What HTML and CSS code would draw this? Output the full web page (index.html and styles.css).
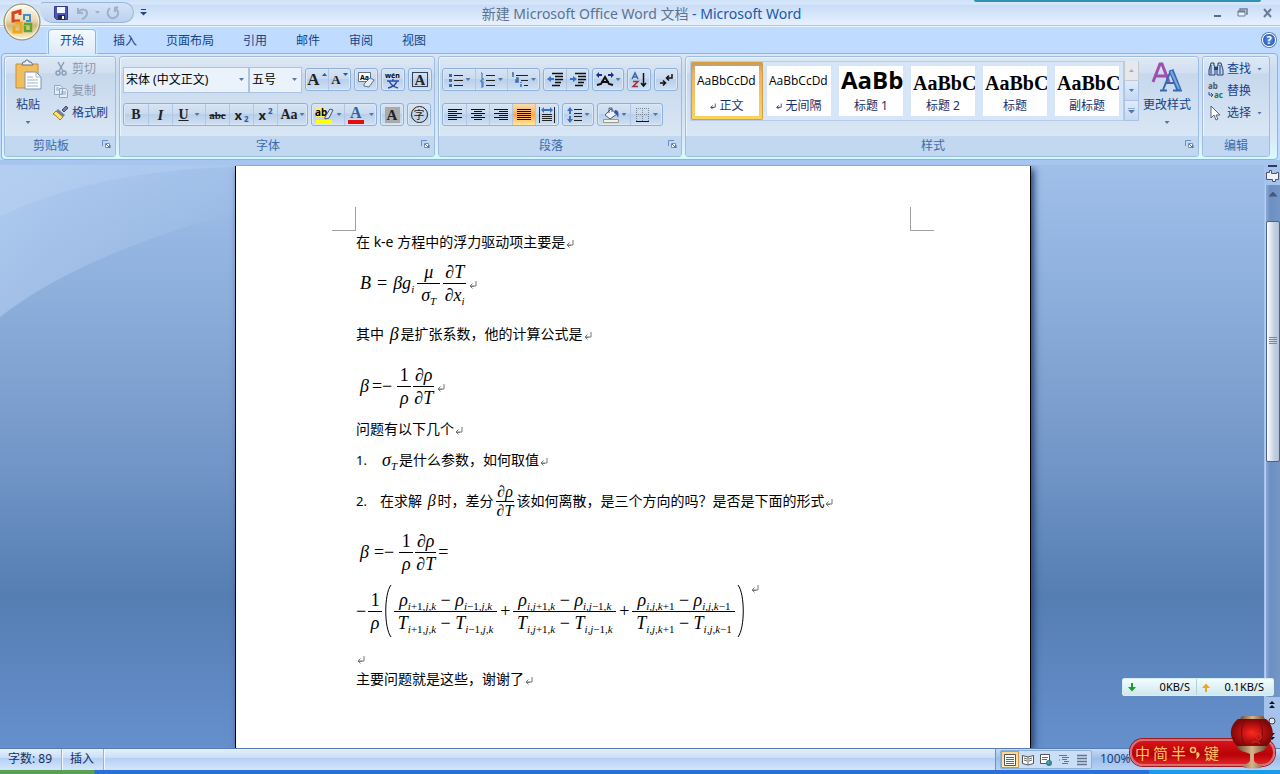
FILE: index.html
```html
<!DOCTYPE html>
<html lang="zh-CN">
<head>
<meta charset="utf-8">
<title>新建 Microsoft Office Word 文档 - Microsoft Word</title>
<link rel="stylesheet" href="styles.css">
</head>
<body>
<svg class="defs" aria-hidden="true">
  <defs>
    <symbol id="ret" viewBox="0 0 8 8"><path d="M7 0v5H2M5 5.500H1M3.500 2.500L1 5l2.500 2.500" fill="none" stroke="currentColor"/></symbol>
    <symbol id="dlg" viewBox="0 0 9 9"><path d="M.5 6V.5H6" fill="none" stroke="#6a8fc0"/><path d="M3.500 3.500h4v4h-4z" fill="#fff" stroke="#6a8fc0"/><path d="M4 4l4 4V5" fill="none" stroke="#4a6fa5"/></symbol>
    <linearGradient id="gGold" x2="0" y2="1"><stop stop-color="#fffef5"/><stop offset=".45" stop-color="#e9d9ae"/><stop offset=".6" stop-color="#d1b878"/><stop offset="1" stop-color="#fff6cf"/></linearGradient>
    <radialGradient id="gRed"><stop stop-color="#ff2a20"/><stop offset=".5" stop-color="#c01212"/><stop offset="1" stop-color="#7c0808"/></radialGradient>
    <linearGradient id="gStem"><stop stop-color="#6b4a32"/><stop offset=".5" stop-color="#d8b48c"/><stop offset="1" stop-color="#6b4a32"/></linearGradient>
    <linearGradient id="gSwoosh" x2="1" y2="0"><stop stop-color="#bcd5f5" stop-opacity=".5"/><stop offset="1" stop-color="#bcd5f5" stop-opacity=".05"/></linearGradient>
  </defs>
</svg>

<header class="titlebar">
  <button class="office" aria-label="Office 按钮">
    <svg viewBox="0 0 38 38" width="38" height="38"><circle cx="19" cy="19" r="18" fill="url(#gGold)" stroke="#8d7f60"/><circle cx="19" cy="19" r="16.500" fill="none" stroke="#fff" stroke-opacity=".7"/>
      <g fill="none" stroke-width="3"><path d="M17 18h-7V10l7-2v4" stroke="#d8421c"/><path d="M21 17v-5h6v6h-4" stroke="#3d8fd0" stroke-width="2"/><path d="M12 20h6v9h-7v-6" stroke="#f0a51c"/><path d="M21 21h7v7h-6v-5" stroke="#5ba632" stroke-width="2.500"/></g></svg>
  </button>
  <div class="qat">
    <button aria-label="保存"><svg viewBox="0 0 16 16" width="16" height="16"><path d="M1.500 1.500h13v13h-11l-2-2z" fill="#5257b5" stroke="#33388c"/><path d="M4 2h8v6H4z" fill="#f3f6ff"/><path d="M5 10h7v5H5z" fill="#28294e"/><path d="M9 11h2v3H9z" fill="#fff"/></svg></button>
    <button aria-label="撤消"><svg viewBox="0 0 16 16" width="16" height="16"><path d="M4 3v5h5M4 8c3-5 9-4 9 0 0 3-2 5-5 6" fill="none" stroke="#9fb0cc" stroke-width="2"/></svg></button>
    <i class="caret pale"></i>
    <button aria-label="重复"><svg viewBox="0 0 16 16" width="16" height="16"><path d="M5 3c-5 5-1 11 4 10 5-1 5-7 2-9M13 2l-3 1v4" fill="none" stroke="#9fb0cc" stroke-width="2"/></svg></button>
  </div>
  <button class="qat-more" aria-label="自定义快速访问工具栏"><svg viewBox="0 0 7 7" width="7" height="7"><path d="M1 .5h5" stroke="#24467e"/><path d="M0 3h7L3.500 6.500z" fill="#24467e"/></svg></button>
  <h1><span>新建 Microsoft Office Word 文档</span> - Microsoft Word</h1>
  <div class="winbtns">
    <button aria-label="最小化"><svg viewBox="0 0 12 12" width="12" height="12"><path d="M2 9h7" stroke="#5b6b86" stroke-width="2"/></svg></button>
    <button aria-label="还原"><svg viewBox="0 0 12 12" width="12" height="12"><path d="M3 3V2h7v5H9" fill="none" stroke="#6b7c98" stroke-width="1.500"/><path d="M1 4h7v5H1z" fill="#e8f1fd" stroke="#6b7c98"/><path d="M1 4.500h7" stroke="#6b7c98" stroke-width="2"/></svg></button>
    <button aria-label="关闭"><svg viewBox="0 0 12 12" width="12" height="12"><path d="M2 2l7 8M9 2l-7 8" stroke="#6b7c98" stroke-width="2"/></svg></button>
  </div>
  <div class="peek"></div>
</header>

<nav class="tabs" role="tablist">
  <button role="tab" aria-selected="true" class="tab on">开始</button>
  <button role="tab" class="tab">插入</button>
  <button role="tab" class="tab">页面布局</button>
  <button role="tab" class="tab">引用</button>
  <button role="tab" class="tab">邮件</button>
  <button role="tab" class="tab">审阅</button>
  <button role="tab" class="tab">视图</button>
  <button class="help" aria-label="帮助">?</button>
</nav>

<section class="ribbon">
  <section class="group clip">
    <div class="body">
      <button class="big paste"><svg viewBox="0 0 28 32" width="28" height="32"><path d="M2 4h22v24H2z" fill="#f2bd5b" stroke="#c78f34"/><path d="M8 5h11l-2-3h-2a2 2 0 0 0-4 0H9z" fill="#eef0f2" stroke="#66707c"/><path d="M11 12h11l5 5v12H11z" fill="#fff" stroke="#7b94b5"/><path d="M22 12v5h5M13 17h6M13 20h11M13 23h11M13 26h11" fill="none" stroke="#9fb4ce"/></svg><span>粘贴</span><i class="caret"></i></button>
      <div class="stack">
        <button class="cmd off"><svg viewBox="0 0 16 16" width="16" height="16"><path d="M5 1l5 9M11 1l-5 9" stroke="#8c9db8" stroke-width="1.500"/><circle cx="5" cy="12" r="2" fill="none" stroke="#8c9db8" stroke-width="1.500"/><circle cx="11" cy="12" r="2" fill="none" stroke="#8c9db8" stroke-width="1.500"/></svg>剪切</button>
        <button class="cmd off"><svg viewBox="0 0 16 16" width="16" height="16"><path d="M1.500 2.500h6l2 2v7h-8zM6.500 5.500h6l2 2v7h-8z" fill="#e6edf8" stroke="#93a6c4"/><path d="M3 5h3M3 7h3M8 9h5M8 11h5" stroke="#93a6c4"/></svg>复制</button>
        <button class="cmd"><svg viewBox="0 0 16 16" width="16" height="16"><path d="M9 5l4-4 2 2-4 4z" fill="#7a7fa5" stroke="#434b78"/><path d="M5 4l7 6-2 2-7-6z" fill="#6a80b0"/><path d="M3 6l7 6-3 3C5 13 3 10 0 9z" fill="#ffe36b" stroke="#a57a20"/></svg>格式刷</button>
      </div>
    </div>
    <footer>剪贴板<svg class="dlg"><use href="#dlg"/></svg></footer>
  </section>

  <section class="group font">
    <div class="body rows">
      <div class="row">
        <div class="combos">
          <label class="combo name"><select aria-label="字体"><option>宋体 (中文正文)</option></select><i class="caret"></i></label>
          <label class="combo size"><select aria-label="字号"><option>五号</option></select><i class="caret"></i></label>
        </div>
        <div class="bar"><button class="b" aria-label="增大字体"><b class="s16">A</b><svg class="hi" viewBox="0 0 5 3" width="5" height="3"><path d="M0 3h5L2.500 0z" fill="#2858a0"/></svg></button><button class="b" aria-label="缩小字体"><b class="s12">A</b><svg class="hi" viewBox="0 0 5 3" width="5" height="3"><path d="M0 0h5L2.500 3z" fill="#2858a0"/></svg></button></div>
        <div class="bar"><button class="b" aria-label="清除格式"><svg viewBox="0 0 18 18" width="18" height="18"><path d="M1.500 1.500h12v9h-12z" fill="#fff" stroke="#65738b"/><text x="3" y="9" class="t7">Aa</text><path d="M7 13l6-6 4 2-5 7-5-1z" fill="#e9edf5" stroke="#64728a"/></svg></button></div>
        <div class="bar"><button class="b" aria-label="拼音指南"><svg viewBox="0 0 18 18" width="18" height="18"><text x="1" y="7" class="t7">wén</text><path d="M3 10h12M9 8v2M5 10c2 4 5 6 9 7M13 10c-1 3-4 6-9 7" fill="none" stroke="#2b4fae" stroke-width="1.500"/></svg></button></div>
        <div class="bar"><button class="b" aria-label="字符边框"><b class="boxed">A</b></button></div>
      </div>
      <div class="row second">
        <div class="bar"><button class="b"><b>B</b></button><button class="b"><em>I</em></button><button class="b u" aria-label="下划线"><u>U</u><i class="caret"></i></button><button class="b"><s>abc</s></button><button class="b"><b class="sx">x</b><small class="lo">2</small></button><button class="b"><b class="sx">x</b><small class="up">2</small></button><button class="b aa"><b>Aa</b><i class="caret"></i></button></div>
        <div class="bar"><button class="b wide" aria-label="突出显示"><svg viewBox="0 0 18 18" width="18" height="18"><path d="M1 1h10v10H1z" fill="#ffee68"/><text x="0" y="10" class="t10">ab</text><path d="M10 11l5-8 3 1-4 8-4 1z" fill="#dbe5f4" stroke="#44526d"/><path d="M1 14h16v4H1z" fill="#ffff00"/></svg><i class="caret"></i></button><button class="b wide" aria-label="字体颜色"><svg viewBox="0 0 18 18" width="18" height="18"><text x="3" y="12" class="t16">A</text><path d="M1 14h16v4H1z" fill="#e80b0b"/></svg><i class="caret"></i></button></div>
        <div class="bar"><button class="b w22" aria-label="字符底纹"><b class="shade">A</b></button></div>
        <div class="bar"><button class="b w22" aria-label="带圈字符"><span class="ring">字</span></button></div>
      </div>
    </div>
    <footer>字体<svg class="dlg"><use href="#dlg"/></svg></footer>
  </section>

  <section class="group para">
    <div class="body rows">
      <div class="row">
        <div class="bar"><button class="b w32" aria-label="项目符号"><svg viewBox="0 0 16 16" width="16" height="16"><path d="M1 2h3v3H1zM1 7h3v3H1zM1 12h3v3H1z" fill="#3c68b2"/><path d="M6 3.500h9M6 8.500h9M6 13.500h9" stroke="#222"/></svg><i class="caret"></i></button><button class="b w32" aria-label="编号"><svg viewBox="0 0 16 16" width="16" height="16"><path d="M1 1h1v4M1 6h2v2H1v2h3M1 11h2v4H1M1 13h2" fill="none" stroke="#3c68b2"/><path d="M6 3.500h9M6 8.500h9M6 13.500h9" stroke="#222"/></svg><i class="caret"></i></button><button class="b w32" aria-label="多级列表"><svg viewBox="0 0 18 16" width="18" height="16"><path d="M1 1h1v4M5 6h2v4H5V8h2M10 10v1M10 12v3" fill="none" stroke="#3c68b2" stroke-width="1.500"/><path d="M5 3.500h12M10 8.500h7M13 13.500h4" stroke="#222"/></svg><i class="caret"></i></button></div>
        <div class="bar"><button class="b" aria-label="减少缩进量"><svg viewBox="0 0 16 16" width="16" height="16"><path d="M5 1.500h11M8 4.500h8M8 7.500h8M8 10.500h6M5 13.500h8" stroke="#111" stroke-width="1.500"/><path d="M0 7l4-3v2h3v2H4v2z" fill="#3b70c4"/></svg></button><button class="b" aria-label="增加缩进量"><svg viewBox="0 0 16 16" width="16" height="16"><path d="M5 1.500h11M8 4.500h8M8 7.500h8M8 10.500h6M5 13.500h8" stroke="#111" stroke-width="1.500"/><path d="M7 7L3 4v2H0v2h3v2z" fill="#3b70c4"/></svg></button></div>
        <div class="bar"><button class="b w30" aria-label="中文版式"><svg viewBox="0 0 18 16" width="18" height="16"><path d="M1 13l4-1 4-7 4 7 4 1M5 10h8" fill="none" stroke="#111" stroke-width="2"/><path d="M0 3l3-3v2h3v2H3v2zM18 3l-3-3v2h-3v2h3v2z" fill="#1f2b92"/></svg><i class="caret"></i></button></div>
        <div class="bar"><button class="b" aria-label="排序"><svg viewBox="0 0 16 16" width="16" height="16"><path d="M1 7l3-6 3 6M2 5h4" fill="none" stroke="#3d67ac" stroke-width="1.500"/><path d="M2 9.500h5l-5 5h5" fill="none" stroke="#a03038" stroke-width="1.500"/><path d="M12.500 1v13M10 11l2.500 3 2.500-3" fill="none" stroke="#111" stroke-width="1.500"/></svg></button></div>
        <div class="bar"><button class="b" aria-label="显示编辑标记"><svg viewBox="0 0 16 16" width="16" height="16"><path d="M14 2v4H9M11 3.500L8.500 6 11 8.500M2 11h5M5 8.500L7.500 11 5 13.500" fill="none" stroke="#111" stroke-width="1.500"/></svg></button></div>
      </div>
      <div class="row">
        <div class="bar align"><button class="b" aria-label="左对齐"><svg viewBox="0 0 16 14" width="16" height="14"><path d="M1 1.500h14M1 3.500h9M1 5.500h14M1 7.500h9M1 9.500h14M1 11.500h9" stroke="#111"/></svg></button><button class="b" aria-label="居中"><svg viewBox="0 0 16 14" width="16" height="14"><path d="M1 1.500h14M4 3.500h8M1 5.500h14M4 7.500h8M1 9.500h14M4 11.500h8" stroke="#111"/></svg></button><button class="b" aria-label="右对齐"><svg viewBox="0 0 16 14" width="16" height="14"><path d="M1 1.500h14M6 3.500h9M1 5.500h14M6 7.500h9M1 9.500h14M6 11.500h9" stroke="#111"/></svg></button><button class="b pressed" aria-label="两端对齐" aria-pressed="true"><svg viewBox="0 0 16 14" width="16" height="14"><path d="M1 1.500h14M1 3.500h14M1 5.500h14M1 7.500h14M1 9.500h14M1 11.500h14" stroke="#111"/></svg></button><button class="b" aria-label="分散对齐"><svg viewBox="0 0 16 16" width="16" height="16"><path d="M.5 0v16M15.500 0v16M3 7.500h10M3 9.500h10M3 11.500h10M3 13.500h10" stroke="#222"/><path d="M2 3l3-3v2h6V0l3 3-3 3V4H5v2z" fill="#3b70c4"/></svg></button></div>
        <div class="bar"><button class="b w30" aria-label="行距"><svg viewBox="0 0 16 16" width="16" height="16"><path d="M3 0l3 4H4v3H2V4H0zM3 16l3-4H4V9H2v3H0z" fill="#3b70c4"/><path d="M7 2.500h8M7 6.500h8M7 9.500h8M7 13.500h8" stroke="#222"/></svg><i class="caret"></i></button></div>
        <div class="bar"><button class="b w32" aria-label="底纹"><svg viewBox="0 0 18 16" width="18" height="16"><path d="M3 8l6-6 6 5-7 5z" fill="#eef3fb" stroke="#4c5a74"/><path d="M7 6V1h3v4" fill="none" stroke="#4c5a74"/><path d="M13 3c4 0 4 4 3 8-1-3-2-4-4-5z" fill="#2e5aa8"/><path d="M1.500 12.500h15v3h-15z" fill="#f3f1e3" stroke="#99988c"/></svg><i class="caret"></i></button><button class="b w32" aria-label="边框"><svg viewBox="0 0 16 16" width="16" height="16"><path d="M1.500 1v13M7.500 1v13M13.500 1v13M1 1.500h13M1 7.500h13" stroke="#7b8799" stroke-dasharray="1 1"/><path d="M1 14.500h13" stroke="#111"/></svg><i class="caret"></i></button></div>
      </div>
    </div>
    <footer>段落<svg class="dlg"><use href="#dlg"/></svg></footer>
  </section>

  <section class="group styles">
    <div class="body">
      <div class="gallery">
        <button class="style sel"><span class="pv">AaBbCcDd</span><span class="nm"><svg class="ret"><use href="#ret"/></svg> 正文</span></button>
        <button class="style"><span class="pv">AaBbCcDd</span><span class="nm"><svg class="ret"><use href="#ret"/></svg> 无间隔</span></button>
        <button class="style"><span class="pv h1">AaBb</span><span class="nm">标题 1</span></button>
        <button class="style"><span class="pv h2">AaBbC</span><span class="nm">标题 2</span></button>
        <button class="style"><span class="pv h2">AaBbC</span><span class="nm">标题</span></button>
        <button class="style"><span class="pv h2">AaBbC</span><span class="nm">副标题</span></button>
      </div>
      <div class="spin"><button class="dis" aria-label="上一行"><i class="caret flip"></i></button><button aria-label="下一行"><i class="caret"></i></button><button aria-label="其他"><i class="caret lined"></i></button></div>
      <button class="big change"><svg viewBox="0 0 30 30" width="30" height="30"><path d="M1 20L8 2h2l7 18M4 14h10" fill="none" stroke="#a04fae" stroke-width="3"/><path d="M11 28l8-20M14 21h10" fill="none" stroke="#3668b4" stroke-width="2"/><path d="M19 8l8 20" stroke="#3668b4" stroke-width="5"/><path d="M19 9l8 18" stroke="#78a8e6" stroke-width="2"/><path d="M8 28.500h7M21 28.500h9" stroke="#3668b4" stroke-width="2"/></svg><span>更改样式</span><i class="caret"></i></button>
    </div>
    <footer>样式<svg class="dlg"><use href="#dlg"/></svg></footer>
  </section>

  <section class="group edit">
    <div class="body stack">
      <button class="cmd"><svg viewBox="0 0 16 16" width="16" height="16"><path d="M3 2h3v3h1v9H1V9zM10 2h3l2 7v5H9V5h1z" fill="#c2d5f2" stroke="#27406f"/><path d="M6 6h4v3H6z" fill="#27406f"/><path d="M3 4v9M12 4v9" stroke="#27406f"/></svg>查找<i class="caret"></i></button>
      <button class="cmd"><svg viewBox="0 0 16 16" width="16" height="16"><text x="0" y="6" class="t8">ab</text><text x="6" y="15" class="t8 grn">ac</text><path d="M1 9v3h4M3 10l2 2-2 2" fill="none" stroke="#294f8f"/></svg>替换</button>
      <button class="cmd"><svg viewBox="0 0 16 16" width="16" height="16"><path d="M3 1v12l3-3 2 5 2-1-2-4h4z" fill="#fff" stroke="#58657c"/></svg>选择<i class="caret"></i></button>
    </div>
    <footer>编辑</footer>
  </section>
</section>

<main class="workspace">
  <svg class="swoosh" viewBox="0 0 1280 583" preserveAspectRatio="none" aria-hidden="true"><path d="M0 0h236v48C150 70 60 105 0 152z" fill="url(#gSwoosh)"/><path d="M0 0h236v2C140 4 60 22 0 52z" fill="#d0e2fa" fill-opacity=".2"/></svg>
  <div class="desk">
    <article class="page">
      <div class="corners"><i></i><i></i></div>
      <p class="l22">在 k-e 方程中的浮力驱动项主要是<svg class="ret"><use href="#ret"/></svg></p>
      <p class="l60 eq first"><span class="m"><var>B</var><span class="op">=</span><var>βg<sub>i</sub></var><span class="frac"><var>μ</var><var>σ<sub>T</sub></var></span><span class="frac"><var>∂T</var><var>∂x<sub>i</sub></var></span></span><svg class="ret"><use href="#ret"/></svg></p>
      <p class="l42">其中&nbsp;<span class="m"><var>β</var></span>是扩张系数，他的计算公式是<svg class="ret"><use href="#ret"/></svg></p>
      <p class="l62 eq"><span class="m"><var>β</var><span class="op tight">=−</span><span class="frac one"><span>1</span><var>ρ</var></span><span class="frac"><var>∂ρ</var><var>∂T</var></span></span><svg class="ret"><use href="#ret"/></svg></p>
      <p class="l24">问题有以下几个<svg class="ret"><use href="#ret"/></svg></p>
      <p class="l38"><span class="num">1.</span><span class="m"><var>σ<sub>T</sub></var></span>是什么参数，如何取值<svg class="ret"><use href="#ret"/></svg></p>
      <p class="l44"><span class="num">2.</span>在求解&nbsp;<span class="m"><var>β</var></span>时，差分<span class="m"><span class="frac"><var>∂ρ</var><var>∂T</var></span></span>该如何离散，是三个方向的吗？是否是下面的形式<svg class="ret"><use href="#ret"/></svg></p>
      <p class="l58 eq"><span class="m"><var>β</var><span class="op">=−</span><span class="frac one"><span>1</span><var>ρ</var></span><span class="frac"><var>∂ρ</var><var>∂T</var></span><span>=</span></span></p>
      <p class="l60 long"><span class="m"><span>−</span><span class="frac one"><span>1</span><var>ρ</var></span><svg class="paren" viewBox="0 0 8 54"><path d="M7 1C0 10 0 44 7 53" fill="none" stroke="#000"/></svg><span class="frac wide"><span><var>ρ</var><sub><i>i</i>+1,<i>j</i>,<i>k</i></sub> − <var>ρ</var><sub><i>i</i>−1,<i>j</i>,<i>k</i></sub></span><span><var>T</var><sub><i>i</i>+1,<i>j</i>,<i>k</i></sub> − <var>T</var><sub><i>i</i>−1,<i>j</i>,<i>k</i></sub></span></span><span class="plus">+</span><span class="frac wide"><span><var>ρ</var><sub><i>i</i>,<i>j</i>+1,<i>k</i></sub> − <var>ρ</var><sub><i>i</i>,<i>j</i>−1,<i>k</i></sub></span><span><var>T</var><sub><i>i</i>,<i>j</i>+1,<i>k</i></sub> − <var>T</var><sub><i>i</i>,<i>j</i>−1,<i>k</i></sub></span></span><span class="plus">+</span><span class="frac wide"><span><var>ρ</var><sub><i>i</i>,<i>j</i>,<i>k</i>+1</sub> − <var>ρ</var><sub><i>i</i>,<i>j</i>,<i>k</i>−1</sub></span><span><var>T</var><sub><i>i</i>,<i>j</i>,<i>k</i>+1</sub> − <var>T</var><sub><i>i</i>,<i>j</i>,<i>k</i>−1</sub></span></span><svg class="paren" viewBox="0 0 8 54"><path d="M1 1C8 10 8 44 1 53" fill="none" stroke="#000"/></svg></span><svg class="ret top"><use href="#ret"/></svg></p>
      <p class="l28"><svg class="ret"><use href="#ret"/></svg></p>
      <p class="l20">主要问题就是这些，谢谢了<svg class="ret"><use href="#ret"/></svg></p>
    </article>
  </div>
  <aside class="scroll">
    <div class="split"></div>
    <button class="ruler" aria-label="标尺"><svg viewBox="0 0 14 14" width="14" height="14"><path d="M1.500 3.500h3v-2h2v3h5v-1h2v7h-3v2h-3v-2h-6z" fill="#eef2fa" stroke="#4b5468"/></svg></button>
    <div class="track"><button class="arrow" aria-label="向上滚动"><i class="caret flip"></i></button><div class="thumb"><svg viewBox="0 0 8 8" width="8" height="8"><path d="M0 .5h8M0 2.500h8M0 4.500h8M0 6.500h8" stroke="#7f8898"/></svg></div></div>
    <div class="browse"><button aria-label="前一页"><svg viewBox="0 0 8 8" width="8" height="8"><path d="M4 0l3 3H1zM4 4l3 3H1z" fill="#111"/></svg></button><button aria-label="选择浏览对象"><svg viewBox="0 0 8 8" width="8" height="8"><circle cx="4" cy="4" r="3" fill="#dfe6ef" stroke="#444"/></svg></button><button aria-label="下一页"><svg viewBox="0 0 8 8" width="8" height="8"><path d="M4 3l3-3H1zM4 7l3-3H1z" fill="#111"/></svg></button></div>
  </aside>
  <div class="net"><span><svg viewBox="0 0 9 9" width="9" height="9"><path d="M3 0h2v4h3L4 8.500 0 4h3z" fill="#16a029"/></svg>0KB/S</span><span><svg viewBox="0 0 9 9" width="9" height="9"><path d="M3 9h2V5h3L4 .5 0 5h3z" fill="#efa51b"/></svg>0.1KB/S</span></div>
</main>

<footer class="status">
  <button>字数: 89</button><button>插入</button>
  <div class="right">
    <div class="views">
      <button class="on" aria-label="页面视图"><svg viewBox="0 0 12 12" width="12" height="12"><path d="M.5.5h11v11H.5z" fill="#fff" stroke="#555"/><path d="M2 3.500h8M2 5.500h8M2 7.500h8M2 9.500h8" stroke="#666"/></svg></button>
      <button aria-label="阅读版式"><svg viewBox="0 0 12 12" width="12" height="12"><path d="M.5 1.500L6 3l5.500-1.500v8L6 11 .5 9.500z" fill="#fff" stroke="#555"/><path d="M6 3v8M2 4l3 1M2 6l3 1M10 4L7 5M10 6L7 7" stroke="#666"/></svg></button>
      <button aria-label="Web 版式"><svg viewBox="0 0 12 12" width="12" height="12"><path d="M.5.5h9v9h-9z" fill="#fff" stroke="#555"/><path d="M2 3.500h6M2 5.500h5" stroke="#666"/><circle cx="9" cy="9" r="3" fill="#2d80a0"/><path d="M7 8l2-1 1 2-2 1z" fill="#5cb560"/></svg></button>
      <button aria-label="大纲视图"><svg viewBox="0 0 12 12" width="12" height="12"><path d="M1 1.500h8M4 3.500h7M4 5.500h5M6 7.500h5M4 9.500h6M1 6h1" stroke="#66718a"/></svg></button>
      <button aria-label="普通视图"><svg viewBox="0 0 12 12" width="12" height="12"><path d="M1 1.500h10M1 4.500h10M1 7.500h10M1 10.500h10" stroke="#66718a" stroke-width="1.500"/></svg></button>
    </div>
    <button class="zoom">100%</button>
  </div>
  <div class="ime"><span>中</span><span>简</span><span>半</span><svg viewBox="0 0 12 14" width="12" height="14"><circle cx="4" cy="4" r="2.500" fill="none" stroke="#ffc463" stroke-width="1.500"/><path d="M8 6c5 1 2 6-1 7 2-3-1-5 1-7z" fill="#ffc463"/></svg><span>键</span>
    <svg class="lantern" viewBox="0 0 44 54" width="44" height="54"><path d="M8 4C-2 12-1 24 8 32h28c9-8 9-20 0-28z" fill="url(#gRed)"/><path d="M16 4c-6 8-6 20 0 28M28 4c6 8 6 20 0 28" fill="none" stroke="#7c0808"/><path d="M12 1h21l2 3H10z" fill="url(#gStem)"/><path d="M7 31h30c-1 5-9 6-13 8v6c0 4 8 4 8 7 0 2-19 2-19 0 0-3 7-3 7-7v-6c-4-2-12-3-13-8z" fill="url(#gStem)"/><path d="M25 22c0-5 7-4 6 1-1 3-5 2-4-1M22 28c3-3 7-1 8 1" fill="none" stroke="#d8352e"/></svg>
  </div>
</footer>
<div class="taskbar"><span></span></div>
</body>
</html>
```

FILE: styles.css
```css
* { box-sizing: border-box; }
body { margin: 0; height: 100vh; display: flex; flex-direction: column; overflow: hidden; background: #bfdbff; color: #15428b; font: 12px/16px "Noto Sans", "Noto Sans CJK SC", sans-serif; }
button, select { font: inherit; color: inherit; background: none; border: 0; padding: 0; margin: 0; }
button { display: flex; align-items: center; justify-content: center; flex: none; }
svg { flex: none; display: block; overflow: visible; }
.defs { position: absolute; width: 0; height: 0; }
.caret { width: 5px; height: 3px; background: #5377ab; clip-path: polygon(0 0, 100% 0, 50% 100%); flex: none; }
.caret.pale { background: #9fb0cc; }
.caret.flip { clip-path: polygon(50% 0, 100% 100%, 0 100%); }
.caret.lined { width: 7px; height: 6px; clip-path: polygon(0 0, 100% 0, 100% 16%, 0 16%, 0 40%, 100% 40%, 50% 100%, 0 40%); }

.titlebar { position: relative; display: flex; align-items: center; height: 26px; flex: none; padding: 0 6px 0 40px; background: linear-gradient(#cfe1f8, #d9e8fb 15%, #c9ddf7 22%, #e3effd 90%); border-bottom: 1px solid #a8c9f0; box-shadow: 0 1px #e8f3ff; }
.office { position: absolute; z-index: 2; left: 3px; top: 3px; }
.qat { display: flex; align-items: center; width: 94px; height: 21px; padding-left: 12px; gap: 5px; border: 1px solid #9ab6dd; border-left-color: transparent; border-radius: 4px 11px 11px 14px; background: linear-gradient(#d4e3f7, #bdd1ee); }
.qat-more { margin-left: 6px; }
.titlebar h1 { flex: 1; margin: 0; padding: 2px 76px 0 0; text-align: center; font-size: 14px; line-height: 20px; font-weight: 400; color: #2159a8; white-space: nowrap; }
.titlebar h1 span { color: #5f7190; }
.winbtns { display: flex; gap: 13px; }
.peek { position: absolute; right: 19px; top: 0; width: 287px; height: 2px; background: #2e91b5; border-radius: 0 0 3px 3px; }

.tabs { display: flex; align-items: flex-end; height: 27px; flex: none; padding: 0 4px 0 48px; }
.tab { height: 25px; padding: 0 11px 2px; margin-right: 5px; border: 1px solid transparent; border-bottom: 0; border-radius: 4px 4px 0 0; margin-bottom: -1px; }
.tab.on { z-index: 1; border-color: #8fb5e8; background: linear-gradient(#f5faff, #dfe9f6); box-shadow: 0 0 2px 1px #d0f3ff; width: 48px; padding: 0 0 2px; }
.help { margin: 0 0 6px auto; width: 14px; height: 14px; border-radius: 50%; background: radial-gradient(#5c92eb, #1d48a8); border: 1px solid #fff; box-shadow: 0 0 0 1px #5b7fb8; color: #fff; font-weight: 700; font-size: 11px; }

.ribbon { display: flex; gap: 3px; flex: none; height: 107px; margin: 0 2px 0 1px; padding: 2px 7px 2px 2px; border: 1px solid #8db2e3; border-radius: 4px; background: linear-gradient(#dbe6f4, #c8dbf0 18%, #d9e9f8 80%, #d8fbff); box-shadow: inset 0 -1px #d2fbff; }
.group { display: flex; flex-direction: column; flex: none; border: 1px solid #9fbde2; border-radius: 3px; background: linear-gradient(#dee8f5, #d1dff0 16%, #c7d8ed 17%, #d9e6f4 80%); box-shadow: inset 1px 1px #eaf2fb; overflow: hidden; }
.group .body { flex: 1; display: flex; min-height: 0; }
.group > footer { position: relative; display: flex; align-items: center; justify-content: center; height: 20px; padding-right: 18px; background: #c1d8f0; color: #3e6aaa; }
.edit > footer { padding: 0; }
.dlg { position: absolute; right: 4px; top: 4px; width: 9px; height: 9px; }
.clip { width: 112px; } .font { width: 316px; } .para { width: 244px; } .styles { flex: 1; min-width: 0; } .edit { width: 68px; }
.big { flex-direction: column; justify-content: flex-start; }
.paste { width: 46px; padding: 3px 0 0; }
.paste span { margin: 4px 0 7px; line-height: 18px; }
.stack { display: flex; flex-direction: column; padding-top: 1px; }
.cmd { height: 22px; gap: 3px; justify-content: flex-start; }
.cmd.off { color: #8d98aa; }
.clip .cmd { padding-left: 2px; }
.group .body.stack { flex-direction: column; padding-left: 5px; }
.edit .cmd .caret { margin-left: 3px; }

.group .rows { flex-direction: column; gap: 12px; padding: 11px 3px 0; }
.row { display: flex; align-items: center; gap: 3px; height: 23px; }
.combos { display: flex; }
.combo { display: flex; align-items: center; height: 26px; border: 1px solid #abc4e4; background: #eaf2fb; color: #000; padding-right: 4px; }
.combo select { appearance: none; flex: 1; min-width: 0; height: 24px; padding-left: 2px; color: #000; }
.combo.name { width: 126px; } .combo.size { width: 53px; }
.bar { display: flex; height: 23px; border: 1px solid #8fb0dc; border-radius: 3px; background: linear-gradient(#d6e3f4, #cadbef 45%, #b9cfea 50%, #cfe0f3); box-shadow: inset 0 0 0 1px #dce8f6; flex: none; }
.b { width: 22px; height: 21px; gap: 2px; color: #222; font: 700 14px/18px "Liberation Serif", serif; }
.b + .b { border-left: 1px solid #b0c6e4; }
.second .b { width: 24px; }
.align .b { width: 23px; }
.b.w32, .b.wide { width: 32px; } .b.w30, .b.aa { width: 30px; } .second .b.u { width: 33px; gap: 6px; }
.second .b.wide { width: 32px; gap: 4px; } .second .b.aa { width: 30px; } .second .b.w22 { width: 22px; }
.row .b .s16 { font-size: 17px; } .row .b .s12 { font-size: 13px; }
.hi { align-self: flex-start; margin-top: 4px; }
.b em { font-size: 15px; }
.b s { font-size: 11px; }
.sx { font: 700 13px/16px "Noto Sans", sans-serif; }
.b small { font: 700 8px/8px "Noto Sans", sans-serif; color: #2b5ca8; }
.lo { align-self: flex-end; margin-bottom: 2px; } .up { align-self: flex-start; margin-top: 3px; }
.boxed { width: 16px; height: 15px; line-height: 14px; font-size: 15px; border: 1px solid #33415c; text-align: center; }
.shade { width: 15px; height: 16px; line-height: 16px; font-size: 15px; background: #aaa; text-align: center; }
.ring { width: 17px; height: 17px; border: 1px solid #222; border-radius: 50%; font: 11px/14px "Noto Sans CJK SC", sans-serif; text-align: center; }
.pressed { background: linear-gradient(#fbdcb0, #f9b25c 45%, #fda746 50%, #ffe89a); }
.t7 { font: 700 7px "Noto Sans", sans-serif; }
.t8 { font: 700 8px "Noto Sans", sans-serif; fill: #555; } .grn { fill: #1c7d32; }
.t10 { font: 700 10px "Noto Sans", sans-serif; } .t16 { font: 700 16px "Liberation Serif", serif; fill: #315c9e; }

.gallery { display: flex; flex: 1; min-width: 0; height: 60px; margin: 4px 0 0 4px; border: 1px solid #b5cbe8; background: #d6e6f8; overflow: hidden; }
.style { flex-direction: column; width: 72px; height: 58px; padding: 4px; overflow: hidden; border: 0; }
.style.sel { background: linear-gradient(#c09a64, #f0b262 20%, #fbd35c); border-radius: 2px; box-shadow: inset 0 0 0 1px #d59f42; }
.pv, .nm { display: flex; align-items: center; width: 64px; background: #fff; overflow: hidden; }
.pv { height: 30px; padding: 0 2px; color: #000; font: 12px/30px "Open Sans", sans-serif; }
.pv.h1 { font: 700 24px/30px "Open Sans", sans-serif; padding-bottom: 3px; }
.pv.h2 { font: 700 20px/30px "Liberation Serif", serif; padding-top: 3px; }
.nm { height: 20px; justify-content: center; gap: 3px; color: #1a2f6b; }
.ret { display: inline-block; width: 8px; height: 8px; color: #777; }
.nm .ret { width: 6px; height: 7px; color: #1a2f6b; }
.spin { display: flex; flex-direction: column; width: 15px; margin-top: 4px; }
.spin button { height: 20px; border: 1px solid #aac3e4; border-top-width: 0; background: linear-gradient(#dfebfa, #c4d9f3); }
.spin .dis { background: #e6e8eb; border-color: #c5cad2; }
.spin .dis .caret { background: #a6adba; }
.change { width: 56px; padding-top: 5px; }
.change span { margin: 4px 0 7px; line-height: 18px; }
.styles .change { margin-right: 3px; }

.workspace { position: relative; flex: 1; display: flex; min-height: 0; margin-top: 5px; background: linear-gradient(#a0c0ea, #8dafdc 22%, #7195c6 52%, #557eb3 74%, #6690cd); box-shadow: 0 -5px #a6c6ef; }
.swoosh { position: absolute; inset: 0; width: 100%; height: 100%; }
.desk { position: relative; flex: 1; min-width: 0; overflow: hidden; padding-top: 1px; padding-left: 2px; }
.page { width: 796px; min-height: 100%; margin: 0 auto; padding: 0 96px; background: #fff; border: solid #000; border-width: 0 1px; box-shadow: 3px 3px 7px #27406f; color: #000; font: 14px/20px "Noto Sans", "Noto Sans CJK SC", sans-serif; }
.corners { display: flex; justify-content: space-between; padding-top: 41px; }
.corners i { width: 24px; height: 24px; border: solid #a0a0a0; border-width: 0 1px 1px 0; }
.corners i + i { border-width: 0 0 1px 1px; }
.page p { display: flex; align-items: center; margin: 0 0 0 24px; white-space: nowrap; }
.page .eq { padding-left: 2px; }
.page p > .ret { margin-left: 1px; margin-top: 3px; }
.page p > .ret.top { align-self: flex-start; margin: 4px 0 0 4px; }
.l20 { height: 20px; } .l22 { height: 22px; } .l24 { height: 24px; } .l28 { height: 28px; } .l38 { height: 38px; } .l42 { height: 42px; } .l44 { height: 44px; } .l58 { height: 58px; } .l60 { height: 60px; } .l62 { height: 62px; }
.page p.l28 { padding-top: 6px; }
.num { width: 24px; font-size: 13px; }
.m { display: flex; align-items: center; gap: 2px; font: 18px/22px "Liberation Serif", serif; margin: 0 2px; }
.op { padding: 0 3px; } .op.tight { padding: 0 3px 0 1px; }
.plus { padding: 0 1px; }
.m sub { font-size: 11px; line-height: 0; vertical-align: -4px; }
.frac { display: flex; flex-direction: column; align-items: center; }
.frac > * { padding: 0 1px; line-height: 22px; }
.frac > :first-child { align-self: stretch; text-align: center; border-bottom: 1px solid #000; }
.first .m { gap: 3px; }
.first .frac { min-width: 23px; }
.frac.one { min-width: 14px; }
.frac.wide { min-width: 103px; }
.long .m { margin-left: 0; }
.l44 .m { font-size: 16px; } .l44 .frac > * { line-height: 18px; }
.paren { width: 8px; height: 54px; }

.scroll { position: relative; width: 16px; display: flex; flex-direction: column; align-items: center; background: #a5c3ec; }
.split { width: 9px; height: 2px; background: #2d3b5c; flex: none; }
.ruler { height: 18px; }
.track { flex: 1; align-self: stretch; margin-left: 1px; border-left: 1px solid #b9d0f0; background: linear-gradient(90deg, #8aa8d2, #6c90c2 30%, #7596c7); }
.arrow { width: 14px; height: 18px; } .arrow .caret { width: 9px; height: 5px; background: #46567c; }
.thumb { display: flex; align-items: center; justify-content: center; width: 14px; height: 47%; margin-top: 18px; border: 1px solid #4d6289; border-radius: 2px; background: linear-gradient(90deg, #fff, #e0e6f1 30%, #c3cfe1 60%, #b4c3da); }
.browse { display: flex; flex-direction: column; gap: 8px; height: 51px; padding-top: 4px; }
.net { position: absolute; right: 6px; bottom: 52px; display: flex; align-items: center; height: 18px; width: 152px; border-radius: 2px; background: linear-gradient(#f2fcfd, #cfe8ee); border: 1px solid #d5eef5; color: #000; font: 11px/16px "Noto Sans", sans-serif; }
.net span { display: flex; align-items: center; justify-content: space-between; flex: 1; padding: 0 6px 0 5px; }
.net span + span { border-left: 1px solid #b5d0da; padding-right: 9px; }

.status { position: relative; display: flex; height: 22px; flex: none; border-top: 1px solid #567db1; background: linear-gradient(#e6effc, #cbdff8 40%, #b5d0f3 45%, #d5e6fb); color: #15305f; }
.status > button { padding: 0 9px 2px 8px; border-right: 1px solid #8fb2e2; box-shadow: 1px 0 #f2f8ff; }
.right { display: flex; align-items: center; margin-left: auto; width: 285px; padding-left: 4px; border-left: 1px solid #6f92c6; background: linear-gradient(#c7dbf6, #9ebeea 45%, #b7d2f5); }
.views { display: flex; border: 1px solid #8eb0dc; border-radius: 2px; background: #cadef6; }
.views button { width: 18px; height: 17px; }
.views .on { background: linear-gradient(#fbd38b, #fff0b5); box-shadow: inset 0 0 0 1px #c89a4e; }
.zoom { margin-left: 8px; padding-bottom: 2px; color: #163d80; }
.ime { position: absolute; right: 5px; bottom: 4px; display: flex; align-items: center; gap: 3px; width: 145px; height: 27px; padding-left: 3px; border: 2px solid #dc6c72; border-radius: 13px; background: linear-gradient(#d81319, #b70307 60%, #e32226); color: #ffc463; font: 15px/20px "Noto Sans CJK SC", sans-serif; box-shadow: 0 0 0 1px #9a1a20; }
.lantern { position: absolute; right: -1px; bottom: -5px; }
.taskbar { display: flex; justify-content: space-between; height: 4px; flex: none; background: linear-gradient(90deg, #54a153 94px, #2b70da 95px); }
.taskbar span { margin-left: auto; width: 131px; background: #1a9be9; }
```
